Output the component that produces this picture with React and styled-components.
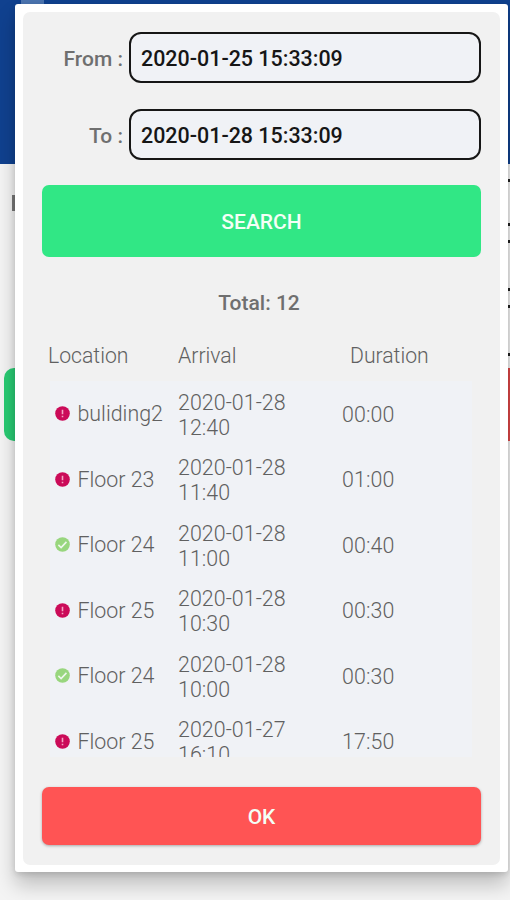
import React from "react";
import styled, { createGlobalStyle } from "styled-components";

const visits = [
  { id: 1, location: "buliding2", date: "2020-01-28", time: "12:40", duration: "00:00", ok: false },
  { id: 2, location: "Floor 23", date: "2020-01-28", time: "11:40", duration: "01:00", ok: false },
  { id: 3, location: "Floor 24", date: "2020-01-28", time: "11:00", duration: "00:40", ok: true },
  { id: 4, location: "Floor 25", date: "2020-01-28", time: "10:30", duration: "00:30", ok: false },
  { id: 5, location: "Floor 24", date: "2020-01-28", time: "10:00", duration: "00:30", ok: true },
  { id: 6, location: "Floor 25", date: "2020-01-27", time: "16:10", duration: "17:50", ok: false },
];

const StatusIcon = ({ ok }) => (
  <Icon viewBox="0 0 16 16">
    <circle cx="8" cy="8" r="7.8" fill={ok ? "#98d67e" : "#cb0b59"} />
    {ok ? (
      <path d="M3.6 8.4l2.9 2.8 5.7-6" fill="none" stroke="#eff7ee" strokeWidth="1.7" />
    ) : (
      <path d="M8 3.9v4.8M8 10.3v1.8" fill="none" stroke="#f3a6c4" strokeWidth="1.7" />
    )}
  </Icon>
);

const App = () => {
  return (
    <Screen>
      <GlobalStyle />
      <Header>
        <HeaderTab />
      </Header>
      <Page>
        <PageText>
          <Stroke />
          <Marks>
            <Mark $top={15} />
            <Mark $top={41} />
            <Mark $top={14} />
            <Mark $top={45} />
            <Mark $top={14} />
            <Mark $top={45} />
          </Marks>
        </PageText>
        <PageActions>
          <PageButton $color="#29cb73" />
          <PageButton $color="#e04848" $end />
        </PageActions>
      </Page>

      <Dialog>
        <Panel>
          <Fields>
            <Field>
              <Label>From :</Label>
              <Input>2020-01-25 15:33:09</Input>
            </Field>
            <Field>
              <Label>To :</Label>
              <Input>2020-01-28 15:33:09</Input>
            </Field>
          </Fields>
          <Button $color="#31e785" $height={72}>
            SEARCH
          </Button>
          <Total>Total: 12</Total>
          <TableHead>
            <span>Location</span>
            <span>Arrival</span>
            <span>Duration</span>
          </TableHead>
          <List>
            {visits.map((visit) => (
              <Row key={visit.id}>
                <Location>
                  <StatusIcon ok={visit.ok} />
                  {visit.location}
                </Location>
                <Arrival>
                  {visit.date}
                  <br />
                  {visit.time}
                </Arrival>
                <Duration>{visit.duration}</Duration>
              </Row>
            ))}
          </List>
          <Button $color="#ff5454" $height={58} $raised>
            OK
          </Button>
        </Panel>
      </Dialog>
    </Screen>
  );
};

const GlobalStyle = createGlobalStyle`
  * {
    box-sizing: border-box;
  }
  body {
    margin: 0;
    font-family: Roboto, "Liberation Sans", sans-serif;
    font-size: 21.3px;
    color: #6f6f6f;
  }
`;

const Screen = styled.div`
  position: relative;
  width: 510px;
  height: 900px;
  overflow: hidden;
  background: #f4f4f4;
`;

const Header = styled.div`
  height: 164px;
  background: #10418f;
`;

const HeaderTab = styled.div`
  width: 23px;
  height: 4px;
  margin-left: 21px;
  background: #4b74b0;
`;

const Page = styled.div`
  display: flex;
  flex-direction: column;
`;

const PageText = styled.div`
  display: flex;
  justify-content: space-between;
  height: 204px;
`;

const Stroke = styled.div`
  width: 3px;
  height: 16px;
  margin: 31px 0 0 12px;
  background: #777;
`;

const Marks = styled.div`
  width: 2px;
`;

const Mark = styled.div`
  height: 3px;
  margin-top: ${(props) => props.$top}px;
  background: #222;
`;

const PageActions = styled.div`
  display: flex;
  justify-content: space-between;
  padding-left: 4px;
`;

const PageButton = styled.div`
  width: ${(props) => (props.$end ? "2px" : "120px")};
  height: 73px;
  border-radius: ${(props) => (props.$end ? 0 : "10px")};
  background: ${(props) => props.$color};
`;

const Dialog = styled.div`
  position: absolute;
  top: 4px;
  left: 15px;
  width: 493px;
  height: 868px;
  padding: 8px 8px 7px;
  border-radius: 3px;
  background: #fff;
  box-shadow: 0 13px 20px rgba(0, 0, 0, 0.22), 0 2px 6px rgba(0, 0, 0, 0.14);
`;

const Panel = styled.div`
  height: 853px;
  padding: 20px 19px 0;
  border-radius: 7px;
  background: #f1f1f1;
`;

const Fields = styled.div`
  display: flex;
  flex-direction: column;
  gap: 26px;
  margin-bottom: 25px;
`;

const Field = styled.div`
  display: flex;
  align-items: center;
  height: 51px;
`;

const Label = styled.div`
  width: 81px;
  margin-right: 6px;
  padding-top: 2px;
  text-align: right;
  font-weight: 500;
  font-size: 21px;
`;

const Input = styled.div`
  flex: 1;
  height: 51px;
  padding-left: 10px;
  line-height: 49px;
  border: 2px solid #161616;
  border-radius: 12px;
  background: #f0f2f6;
  color: #161616;
  font-weight: 500;
  font-size: 21.45px;
`;

const Button = styled.div`
  display: flex;
  align-items: center;
  justify-content: center;
  height: ${(props) => props.$height}px;
  padding-top: 2px;
  border-radius: 7px;
  background: ${(props) => props.$color};
  color: #f4fff6;
  font-weight: 500;
  font-size: 21px;
  box-shadow: ${(props) => (props.$raised ? "0 1px 3px rgba(0, 0, 0, 0.3)" : "none")};
`;

const Total = styled.div`
  height: 25px;
  margin-top: 34px;
  padding-right: 5px;
  line-height: 25px;
  text-align: center;
  font-weight: 500;
  font-size: 21px;
`;

const TableHead = styled.div`
  display: grid;
  grid-template-columns: 130px 172px 1fr;
  margin-top: 27px;
  padding-left: 6px;
  line-height: 25px;
  font-weight: 300;
  font-size: 21.2px;
  color: #606060;
`;

const List = styled.div`
  width: 422px;
  height: 376px;
  margin: 13px 0 30px 8px;
  overflow: hidden;
  background: #f0f2f6;
  font-weight: 300;
  font-size: 21.4px;
  color: #606060;
`;

const Row = styled.div`
  display: grid;
  grid-template-columns: 128px 164px 1fr;
  align-items: center;
  height: 65.5px;
  line-height: 25px;
`;

const Location = styled.div`
  display: flex;
  align-items: center;
  white-space: nowrap;
`;

const Arrival = styled.div`
  padding-top: 2px;
  letter-spacing: 0.05px;
`;

const Duration = styled.div`
  padding-top: 1px;
  letter-spacing: 0.1px;
`;

const Icon = styled.svg`
  width: 15px;
  height: 15px;
  margin: 0 7.5px 0 5px;
  flex-shrink: 0;
`;

export default App;
